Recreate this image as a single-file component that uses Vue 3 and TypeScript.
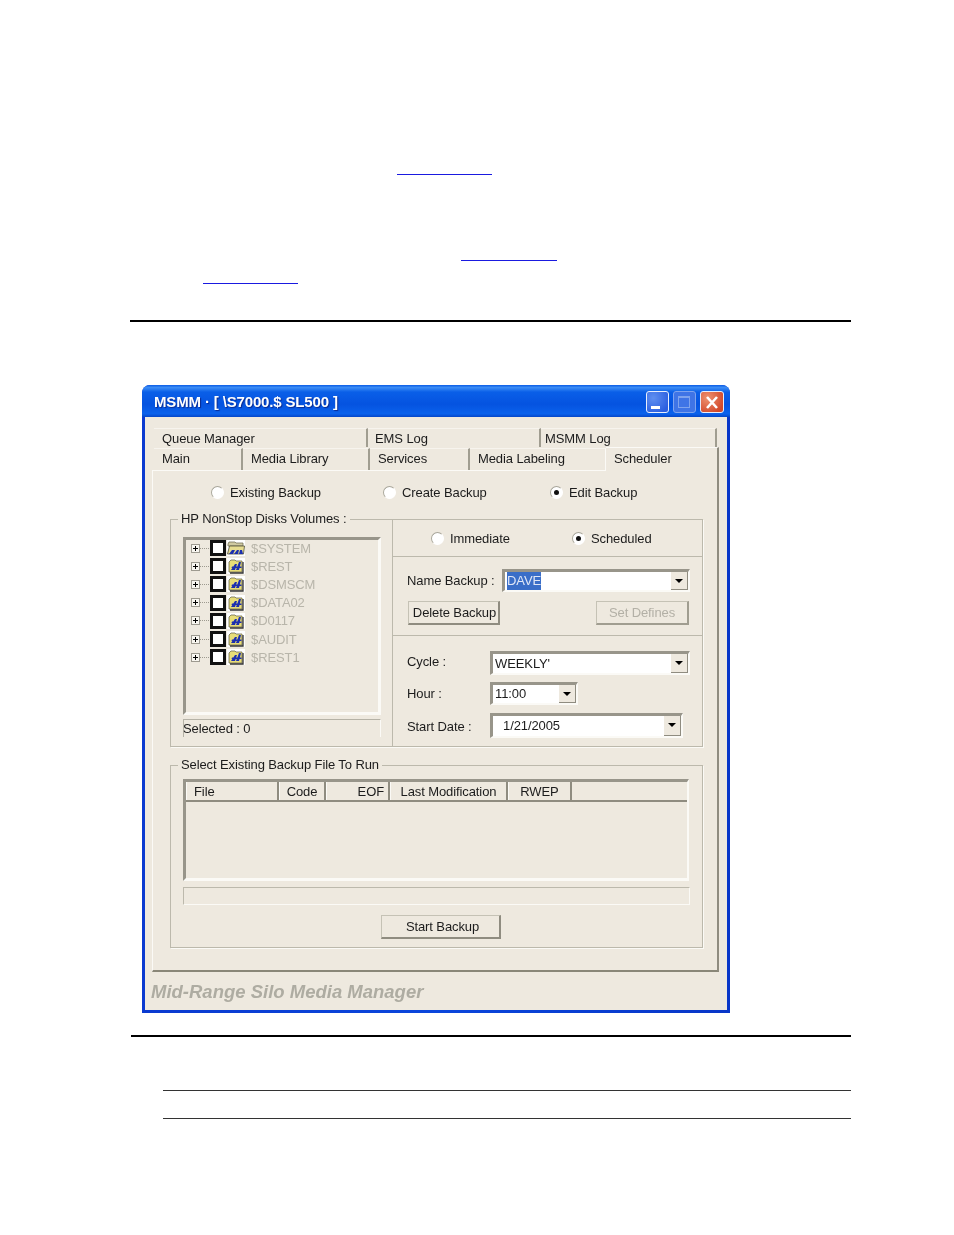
<script setup lang="ts">
const topTabs = [
  { label: 'Queue Manager', width: 214 },
  { label: 'EMS Log', width: 173 },
  { label: 'MSMM Log', width: 176 },
]
const bottomTabs = [
  { label: 'Main', width: 89 },
  { label: 'Media Library', width: 127 },
  { label: 'Services', width: 100 },
  { label: 'Media Labeling', width: 136 },
]
const volumes = ['$SYSTEM', '$REST', '$DSMSCM', '$DATA02', '$D0117', '$AUDIT', '$REST1']
const columns = [
  { label: 'File', width: 93, cls: 'left' },
  { label: 'Code', width: 47, cls: 'center' },
  { label: 'EOF', width: 64, cls: 'right' },
  { label: 'Last Modification', width: 118, cls: 'center' },
  { label: 'RWEP', width: 64, cls: 'center' },
]
</script>

<template>
  <div class="page">
    <div class="link link-a"></div>
    <div class="link link-b"></div>
    <div class="link link-c"></div>
    <div class="rule rule-top"></div>

    <div class="window">
      <div class="titlebar">
        <span class="title">MSMM · [ \S7000.$ SL500 ]</span>
        <div class="controls">
          <span class="ctl ctl-min"><i></i></span>
          <span class="ctl ctl-max"><i></i></span>
          <span class="ctl ctl-close">
            <svg viewBox="0 0 22 21" width="22" height="21"><path d="M6 5l10 11M16 5L6 16" stroke="#fff" stroke-width="2.6" fill="none" /></svg>
          </span>
        </div>
      </div>

      <div class="client">
        <div class="tabs">
          <div class="tab-row row-one">
            <span v-for="t in topTabs" :key="t.label" class="tab" :style="{ width: t.width + 'px' }">{{ t.label }}</span>
          </div>
          <div class="tab-row row-two">
            <span v-for="t in bottomTabs" :key="t.label" class="tab" :style="{ width: t.width + 'px' }">{{ t.label }}</span>
            <span class="tab active">Scheduler</span>
          </div>
        </div>

        <div class="panel">
          <div class="mode-row">
            <label class="radio"><i class="dot"></i>Existing Backup</label>
            <label class="radio"><i class="dot"></i>Create Backup</label>
            <label class="radio"><i class="dot on"></i>Edit Backup</label>
          </div>

          <div class="group group-volumes">
            <span class="legend">HP NonStop Disks Volumes :</span>
            <div class="left-col">
              <div class="tree">
                <div v-for="(v, i) in volumes" :key="v" class="tree-row">
                  <span class="expander"></span>
                  <span class="connector"></span>
                  <span class="check"></span>
                  <svg class="folder" viewBox="0 0 18 16" width="18" height="16">
                    <rect width="18" height="16" fill="#fff" />
                    <template v-if="i === 0">
                      <path d="M1 4l1-2h6l1 1h7v3H1z" fill="#cfc9a0" stroke="#77745c" stroke-width=".8" />
                      <path d="M0.500 14l2-8h15l-1 8z" fill="#e6dc90" stroke="#4e4c38" stroke-width=".8" />
                      <path d="M2 14l3-4h3l-2 4zM7 14l3-4h2l-1 4zM12 14l1-4h2l1 4z" fill="#1c2fb0" />
                    </template>
                    <template v-else>
                      <path d="M2 4l2-2h4l1 1h6v11H2z" fill="#e8dd78" stroke="#6d6a50" stroke-width=".8" />
                      <path d="M16 4v11H3" stroke="#333" stroke-width="1.300" fill="none" />
                      <path d="M4 12l4-6h2l-2 6zM9 12l3-8h2l-2 8zM5 8.500h9.500v1.500H4.500z" fill="#1c2fb0" />
                    </template>
                  </svg>
                  <span class="vol-name">{{ v }}</span>
                </div>
              </div>
              <div class="selected">Selected : 0</div>
            </div>

            <div class="right-col">
              <div class="section when">
                <label class="radio"><i class="dot"></i>Immediate</label>
                <label class="radio"><i class="dot on"></i>Scheduled</label>
              </div>

              <div class="section naming">
                <div class="name-row">
                  <span>Name Backup :</span>
                  <div class="combo combo-name">
                    <span class="combo-text"><b>DAVE</b></span>
                    <span class="drop"></span>
                  </div>
                </div>
                <div class="btn-row">
                  <button class="btn btn-delete">Delete Backup</button>
                  <button class="btn btn-defines" disabled>Set Defines</button>
                </div>
              </div>

              <div class="section schedule">
                <span class="field-label">Cycle :</span>
                <div class="combo combo-cycle"><span class="combo-text">WEEKLY'</span><span class="drop"></span></div>
                <span class="field-label hour-label">Hour :</span>
                <div class="combo combo-hour"><span class="combo-text">11:00</span><span class="drop"></span></div>
                <span class="field-label date-label">Start Date :</span>
                <div class="combo combo-date"><span class="combo-text date-text">1/21/2005</span><span class="drop"></span></div>
              </div>
            </div>
          </div>

          <div class="group group-files">
            <span class="legend">Select Existing Backup File To Run</span>
            <div class="list">
              <div class="list-head">
                <span v-for="c in columns" :key="c.label" class="col" :class="c.cls" :style="{ width: c.width + 'px' }">{{ c.label }}</span>
              </div>
            </div>
            <div class="status"></div>
            <button class="btn btn-start">Start Backup</button>
          </div>
        </div>

        <div class="brand">Mid-Range Silo Media Manager</div>
      </div>
    </div>

    <div class="rule rule-bottom"></div>
    <div class="rule rule-short first"></div>
    <div class="rule rule-short second"></div>
  </div>
</template>

<style>
html, body { margin: 0; background: #fff; }
</style>

<style scoped>
.page {
  width: 954px;
  height: 1235px;
  overflow: hidden;
  padding-top: 174px;
  box-sizing: border-box;
  font-family: "Liberation Sans", Arial, sans-serif;
  background: #fff;
}
.link { height: 1px; background: #1a1ae0; }
.link-a { width: 95px; margin-left: 397px; }
.link-b { width: 96px; margin-left: 461px; margin-top: 85px; }
.link-c { width: 95px; margin-left: 203px; margin-top: 22px; }
.rule { background: #000; height: 1px; }
.rule-top { margin: 36px 0 0 130px; width: 721px; height: 2px; }
.rule-bottom { margin: 22px 0 0 131px; width: 720px; height: 2px; }
.rule-short { margin-left: 163px; width: 688px; background: #333; }
.first { margin-top: 53px; }
.second { margin-top: 27px; }

.window {
  margin: 63px 0 0 142px;
  width: 588px;
  height: 628px;
  box-sizing: border-box;
  background: linear-gradient(90deg, #0a3ad0, #0a46dc 50%, #0836c8);
  border-radius: 8px 8px 0 0;
  padding: 0 3px 3px;
  display: flex;
  flex-direction: column;
  filter: blur(0.45px);
  color: #1c1c1c;
  font-size: 13px;
  letter-spacing: -0.1px;
}
.titlebar {
  height: 32px;
  flex: none;
  margin: 0 -3px;
  padding: 1px 6px 0 12px;
  box-sizing: border-box;
  display: flex;
  align-items: center;
  justify-content: space-between;
  border-radius: 8px 8px 0 0;
  background: linear-gradient(180deg, #0a5ce6 0%, #3b8cf5 8%, #0a5fe8 22%, #0553e0 60%, #0a62ec 90%, #0546c8 100%);
}
.title {
  color: #fff;
  font-weight: 700;
  font-size: 15px;
  letter-spacing: -0.15px;
  text-shadow: 1px 1px 1px #0a2a90;
  white-space: pre;
}
.controls { display: flex; gap: 4px; }
.ctl {
  width: 23px;
  height: 22px;
  box-sizing: border-box;
  border: 1px solid #e8eefc;
  border-radius: 3px;
  display: block;
  position: relative;
}
.ctl-min { background: radial-gradient(circle at 30% 30%, #5f8ff0, #2c5fe0 80%); }
.ctl-min i { position: absolute; left: 4px; bottom: 3px; width: 9px; height: 3px; background: #fff; }
.ctl-max { background: #3f74e6; border-color: #7ea3ee; }
.ctl-max i { position: absolute; left: 4px; top: 4px; width: 12px; height: 12px; border: 1px solid #7ea3ee; border-top-width: 2px; box-sizing: border-box; }
.ctl-close { width: 24px; background: radial-gradient(circle at 30% 30%, #ee9270, #d2482a 80%); }
.ctl-close svg { position: absolute; left: 0; top: 0; }

.client {
  flex: 1;
  background: #eee9df;
  padding: 11px 0 0 7px;
  display: flex;
  flex-direction: column;
}
.tabs { width: 567px; height: 42px; position: relative; z-index: 1; }
.tab-row { display: flex; padding-left: 2px; }
.row-one { height: 19px; }
.row-two { height: 22px; margin-top: 1px; }
.tab {
  box-sizing: border-box;
  padding-left: 8px;
  line-height: 20px;
  white-space: nowrap;
  border-top: 1px solid #f7f4ee;
  border-right: 2px solid #a09d90;
}
.row-one .tab:nth-child(2) { padding-left: 7px; }
.row-one .tab:nth-child(3) { padding-left: 4px; }
.row-two .tab:nth-child(4) { border-right: 1px solid #fbfaf6; }
.tab.active {
  flex: 1;
  border-right: 2px solid #8f8c80;
  border-top: 1px solid #fbfaf6;
  margin-top: -1px;
  height: 24px;
  line-height: 22px;
  background: #eee9df;
}
.panel {
  width: 567px;
  height: 502px;
  box-sizing: border-box;
  border-left: 1px solid #fbfaf6;
  border-top: 1px solid #fbfaf6;
  border-right: 2px solid #8f8c80;
  border-bottom: 2px solid #8a8778;
  padding: 11px 0 0 17px;
}
.mode-row {
  display: grid;
  grid-template-columns: 172px 167px auto;
  height: 20px;
  padding-left: 41px;
  margin-bottom: 17px;
}
.radio { display: flex; align-items: center; white-space: nowrap; }
.dot {
  width: 13px;
  height: 13px;
  border-radius: 50%;
  background: #fff;
  border: 1px solid #a8a69a;
  border-bottom-color: #fff;
  border-right-color: #fff;
  box-sizing: border-box;
  margin-right: 6px;
  position: relative;
}
.dot.on::after {
  content: "";
  position: absolute;
  left: 3px;
  top: 3px;
  width: 5px;
  height: 5px;
  border-radius: 50%;
  background: #111;
}
.group {
  width: 533px;
  box-sizing: border-box;
  border: 1px solid #bcb9ac;
  box-shadow: 1px 1px 0 #fbfaf6;
  position: relative;
}
.legend {
  position: absolute;
  left: 7px;
  top: -9px;
  padding: 0 3px;
  background: #eee9df;
  line-height: 16px;
  white-space: nowrap;
}
.group-volumes {
  height: 228px;
  display: grid;
  grid-template-columns: 221px 1fr;
  margin-bottom: 18px;
}
.left-col { padding: 17px 0 0 12px; }
.tree {
  width: 198px;
  height: 178px;
  box-sizing: border-box;
  border: 3px solid #98958a;
  border-right-color: #fbfaf6;
  border-bottom-color: #fbfaf6;
  padding: 0 0 0 5px;
  overflow: hidden;
}
.tree-row { display: flex; align-items: center; height: 18.200px; }
.tree-row:first-child { margin-top: -1px; }
.expander {
  width: 9px;
  height: 9px;
  box-sizing: border-box;
  border: 1px solid #9d9a90;
  background:
    linear-gradient(#000, #000) center / 5px 1px no-repeat,
    linear-gradient(#000, #000) center / 1px 5px no-repeat,
    #f8f6f0;
}
.connector { width: 9px; border-top: 1px dotted #9d9a90; margin: 0 1px 0 0; }
.check {
  width: 16px;
  height: 16px;
  box-sizing: border-box;
  border: 3px solid #111;
  background: #fff;
  margin-right: 1px;
}
.folder { flex: none; }
.vol-name { margin-left: 6px; color: #b8b5aa; white-space: nowrap; }
.selected {
  width: 198px;
  height: 18px;
  margin-top: 4px;
  box-sizing: border-box;
  border-top: 1px solid #b5b2a6;
  border-left: 1px solid #b5b2a6;
  border-right: 1px solid #fbfaf6;
  line-height: 17px;
  white-space: nowrap;
  text-indent: -1px;
}
.right-col { border-left: 1px solid #bcb9ac; display: flex; flex-direction: column; }
.section { box-sizing: border-box; }
.when {
  height: 37px;
  border-bottom: 1px solid #bcb9ac;
  display: grid;
  grid-template-columns: 141px auto;
  padding: 1px 0 0 38px;
  align-items: center;
}
.naming { height: 79px; border-bottom: 1px solid #bcb9ac; padding: 12px 12px 0 14px; }
.name-row { display: flex; justify-content: space-between; align-items: center; height: 22px; }
.btn-row { display: flex; justify-content: space-between; margin-top: 10px; padding-right: 1px; padding-left: 1px; }
.combo {
  display: flex;
  box-sizing: border-box;
  border: 3px solid #98958a;
  border-right: 2px solid #fbfaf6;
  border-bottom: 2px solid #fbfaf6;
  background: #fff;
  justify-content: space-between;
  align-items: center;
}
.combo-name { width: 188px; height: 23px; }
.combo-cycle { width: 200px; height: 24px; }
.combo-hour { width: 88px; height: 23px; }
.combo-date { width: 193px; height: 25px; }
.combo-text { padding-left: 2px; line-height: 18px; white-space: nowrap; }
.combo-text b { font-weight: 400; background: #3a6ec8; color: #dfe6f6; display: inline-block; }
.date-text { padding-left: 10px; }
.drop {
  width: 17px;
  height: 100%;
  background: #eee9df;
  border-right: 1px solid #8f8c80;
  border-bottom: 1px solid #8f8c80;
  box-sizing: border-box;
  position: relative;
  flex: none;
}
.drop::after {
  content: "";
  position: absolute;
  left: 4px;
  top: 7px;
  border: 4px solid transparent;
  border-top: 4px solid #000;
  border-bottom: 0;
}
.btn {
  font: inherit;
  letter-spacing: inherit;
  color: inherit;
  background: #eee9df;
  border: 1px solid #fbfaf6;
  border-right: 2px solid #8f8c80;
  border-bottom: 2px solid #8f8c80;
  padding: 0;
  height: 24px;
  display: block;
  white-space: nowrap;
}
.btn-delete { width: 92px; padding-left: 2px; border: 1px solid #c5c2b5; border-right: 2px solid #8f8c80; border-bottom: 2px solid #8f8c80; }
.btn-defines { width: 93px; color: #b3b0a6; border-color: #c5c2b5; border-right-color: #a09d90; border-bottom-color: #a09d90; }
.btn-start { width: 120px; padding-left: 4px; margin: 10px 0 0 198px; border-color: #c5c2b5; border-right-color: #8f8c80; border-bottom-color: #8f8c80; }
.schedule {
  flex: 1;
  display: grid;
  grid-template-columns: 83px 1fr;
  grid-auto-rows: 31px;
  padding: 15px 0 0 14px;
}
.field-label { line-height: 20px; padding-top: 1px; white-space: nowrap; }
.hour-label { padding-top: 2px; }
.date-label { padding-top: 4px; }
.group-files { height: 183px; padding: 13px 0 0 12px; }
.list {
  width: 506px;
  height: 102px;
  box-sizing: border-box;
  border: 3px solid #98958a;
  border-right: 2px solid #fbfaf6;
  border-bottom: 3px solid #fbfaf6;
}
.list-head { display: flex; height: 18px; border-bottom: 2px solid #8f8c80; }
.col {
  box-sizing: border-box;
  border-right: 2px solid #8f8c80;
  border-left: 1px solid #fbfaf6;
  line-height: 19px;
  white-space: nowrap;
  flex: none;
}
.col.left { padding-left: 7px; }
.col.center { text-align: center; }
.col.right { text-align: right; padding-right: 4px; }
.status {
  width: 507px;
  height: 18px;
  margin-top: 6px;
  box-sizing: border-box;
  border-top: 1px solid #bcb9ac;
  border-left: 1px solid #bcb9ac;
  border-right: 1px solid #fbfaf6;
  border-bottom: 1px solid #fbfaf6;
}
.brand {
  margin: 8px 0 0 -1px;
  font-size: 18.500px;
  font-weight: 700;
  font-style: italic;
  letter-spacing: 0;
  color: #aeaca2;
  line-height: 24px;
  white-space: nowrap;
}
</style>
